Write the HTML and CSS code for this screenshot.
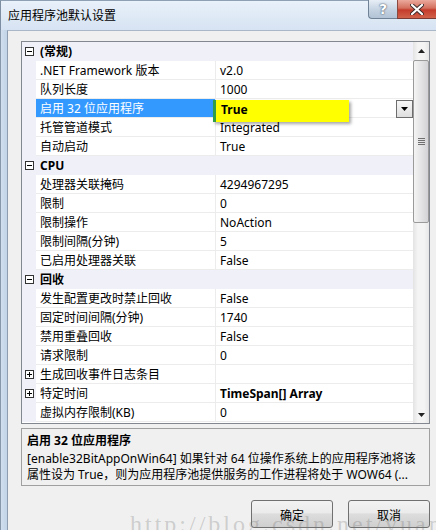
FILE: index.html
```html
<html>
<head>
<meta charset="utf-8">
<title>应用程序池默认设置</title>
<link rel="stylesheet" href="styles.css">
</head>
<body>

<div class="window">
	<div class="titlebar">
		<span class="title">应用程序池默认设置</span>
		<div class="caption">
			<span class="cap-help">?</span>
			<span class="cap-close">
				<svg width="14" height="11" viewBox="0 0 14 11"><path d="M2 1 L12 10 M12 1 L2 10" stroke="#3b2a2a" stroke-width="4" stroke-linecap="round"/><path d="M2 1 L12 10 M12 1 L2 10" stroke="#fff" stroke-width="2.2" stroke-linecap="round"/></svg>
			</span>
		</div>
	</div>

	<div class="frame">
		<div class="edge"></div>
		<div class="client">

			<div class="grid">
				<div class="rows">
					<div class="row cat"><span class="gutter"><svg class="box" width="9" height="9"><rect x="0.5" y="0.5" width="8" height="8" fill="#fff" stroke="#333"/><path d="M2 4.5 H7" stroke="#000"/></svg></span><span class="name">(常规)</span></div>
					<div class="row"><span class="gutter"></span><span class="name">.NET Framework 版本</span><span class="value">v2.0</span></div>
					<div class="row"><span class="gutter"></span><span class="name">队列长度</span><span class="value">1000</span></div>
					<div class="row selected"><span class="gutter"></span><span class="name">启用 32 位应用程序</span><span class="value"><span class="mark">True</span><span class="drop"><svg width="7" height="4"><path d="M0 0 H7 L3.5 4 Z" fill="#000"/></svg></span></span></div>
					<div class="row"><span class="gutter"></span><span class="name">托管管道模式</span><span class="value">Integrated</span></div>
					<div class="row"><span class="gutter"></span><span class="name">自动启动</span><span class="value">True</span></div>
					<div class="row cat"><span class="gutter"><svg class="box" width="9" height="9"><rect x="0.5" y="0.5" width="8" height="8" fill="#fff" stroke="#333"/><path d="M2 4.5 H7" stroke="#000"/></svg></span><span class="name">CPU</span></div>
					<div class="row"><span class="gutter"></span><span class="name">处理器关联掩码</span><span class="value">4294967295</span></div>
					<div class="row"><span class="gutter"></span><span class="name">限制</span><span class="value">0</span></div>
					<div class="row"><span class="gutter"></span><span class="name">限制操作</span><span class="value">NoAction</span></div>
					<div class="row"><span class="gutter"></span><span class="name">限制间隔(分钟)</span><span class="value">5</span></div>
					<div class="row"><span class="gutter"></span><span class="name">已启用处理器关联</span><span class="value">False</span></div>
					<div class="row cat"><span class="gutter"><svg class="box" width="9" height="9"><rect x="0.5" y="0.5" width="8" height="8" fill="#fff" stroke="#333"/><path d="M2 4.5 H7" stroke="#000"/></svg></span><span class="name">回收</span></div>
					<div class="row"><span class="gutter"></span><span class="name">发生配置更改时禁止回收</span><span class="value">False</span></div>
					<div class="row"><span class="gutter"></span><span class="name">固定时间间隔(分钟)</span><span class="value">1740</span></div>
					<div class="row"><span class="gutter"></span><span class="name">禁用重叠回收</span><span class="value">False</span></div>
					<div class="row"><span class="gutter"></span><span class="name">请求限制</span><span class="value">0</span></div>
					<div class="row"><span class="gutter"><svg class="box" width="9" height="9"><rect x="0.5" y="0.5" width="8" height="8" fill="#fff" stroke="#333"/><path d="M2 4.5 H7 M4.5 2 V7" stroke="#000"/></svg></span><span class="name">生成回收事件日志条目</span><span class="value"></span></div>
					<div class="row"><span class="gutter"><svg class="box" width="9" height="9"><rect x="0.5" y="0.5" width="8" height="8" fill="#fff" stroke="#333"/><path d="M2 4.5 H7 M4.5 2 V7" stroke="#000"/></svg></span><span class="name">特定时间</span><span class="value bold">TimeSpan[] Array</span></div>
					<div class="row"><span class="gutter"></span><span class="name">虚拟内存限制(KB)</span><span class="value">0</span></div>
				</div>
				<div class="scrollbar">
					<div class="arrow"><svg width="7" height="4"><path d="M0 4 H7 L3.5 0 Z" fill="#222"/></svg></div>
					<div class="track">
						<div class="thumb"><span class="grip"></span></div>
					</div>
					<div class="arrow"><svg width="7" height="4"><path d="M0 0 H7 L3.5 4 Z" fill="#222"/></svg></div>
				</div>
			</div>

			<div class="desc">
				<div class="desc-title">启用 32 位应用程序</div>
				<div class="desc-line">[enable32BitAppOnWin64] 如果针对 64 位操作系统上的应用程序池将该</div>
				<div class="desc-line">属性设为 True，则为应用程序池提供服务的工作进程将处于 WOW64 (...</div>
			</div>

			<div class="buttons">
				<button class="btn">确定</button>
				<button class="btn">取消</button>
			</div>

		</div>
	</div>

	<div class="watermark">http://blog.csdn.net/yuanbohx</div>
</div>

</body>
</html>
```

FILE: styles.css
```css
body {
	margin: 0;
	font-family: "Noto Sans", "Noto Sans CJK SC", sans-serif;
	font-size: 12px;
	color: #000;
}

.window {
	position: relative;
	width: 436px;
	height: 530px;
	overflow: hidden;
	display: flex;
	flex-direction: column;
	background: #d3e1f1;
}

/* title bar */
.titlebar {
	height: 30px;
	flex: none;
	display: flex;
	justify-content: space-between;
	background: linear-gradient(#e9f1fa, #d6e3f2);
	border-left: 1px solid #7d8ea3;
	border-top: 1px solid #8fa0b4;
	box-sizing: border-box;
}

.title {
	padding: 6px 0 0 7px;
	line-height: 16px;
	font-family: "Noto Sans CJK SC", sans-serif;
}

.caption {
	display: flex;
	align-items: flex-start;
	margin-top: -1px;
}

.cap-help {
	width: 29px;
	height: 19px;
	box-sizing: border-box;
	border: 1px solid #6f8296;
	border-top: none;
	border-right: none;
	border-radius: 0 0 0 4px;
	background: linear-gradient(#e7eef6, #c4d2e1 55%, #b2c3d6);
	color: #fff;
	font: bold 14px "DejaVu Sans", sans-serif;
	text-align: center;
	line-height: 18px;
	text-shadow: 0 0 2px #4a5a6c, 0 0 1px #4a5a6c;
}

.cap-close {
	width: 39px;
	height: 19px;
	box-sizing: border-box;
	border-bottom: 1px solid #7a3a33;
	border-left: 1px solid #8a4a40;
	background: linear-gradient(#eaa99c, #d4705f 45%, #c53c2b 55%, #d0624a);
	display: flex;
	align-items: center;
	justify-content: center;
}

/* frame + client */
.frame {
	flex: 1;
	display: flex;
}

.edge {
	width: 7px;
	flex: none;
	background: linear-gradient(to right, #8898ab 0, #8898ab 1px, #d1dfef 1px, #c2d4e8);
}

.client {
	flex: 1;
	background: #f0f0f0;
	border-left: 1px solid #8e9db0;
	border-top: 1px solid #a9b7c8;
	padding: 10px 6px 0 13px;
	display: flex;
	flex-direction: column;
}

/* property grid */
.grid {
	height: 383px;
	box-sizing: border-box;
	border: 1px solid #828790;
	background: #fff;
	display: flex;
}

.rows {
	width: 391px;
	background: #fff;
}

.row {
	display: grid;
	grid-template-columns: 14px 180px 1fr;
	grid-template-rows: 19px;
	height: 19px;
}

.gutter {
	background: #f0f1f8;
	display: flex;
	align-items: center;
	padding-left: 3px;
}

.box {
	display: block;
}

.name,
.value {
	box-sizing: border-box;
	height: 19px;
	padding-top: 2px;
	line-height: 16px;
	border-bottom: 1px solid #ececec;
	white-space: nowrap;
}

.name {
	padding-left: 4px;
	border-right: 1px solid #ececec;
	overflow: hidden;
}

.value {
	position: relative;
	padding-left: 4px;
}

.bold {
	font-weight: bold;
}

.cat {
	background: #f0f1f8;
}

.cat .name {
	grid-column: 2 / 4;
	font-weight: bold;
	border-right: none;
	border-bottom-color: #f0f1f8;
}

.selected .name {
	background: #3399ff;
	color: #fff;
}

/* yellow marker over the selected value */
.mark {
	position: absolute;
	left: -3px;
	top: 1px;
	width: 128px;
	height: 22px;
	padding-left: 5px;
	border-left: 3px solid #2f9d4a;
	background: #ffff00;
	font-weight: bold;
	line-height: 19px;
	box-shadow: 2px 2px 3px rgba(0,0,0,0.35);
}

.drop {
	position: absolute;
	right: 0;
	top: 1px;
	width: 17px;
	height: 18px;
	box-sizing: border-box;
	border: 1px solid #6d6d6d;
	background: linear-gradient(#f7f7f7, #dedede);
	display: flex;
	align-items: center;
	justify-content: center;
}

.scrollbar {
	width: 16px;
	display: flex;
	flex-direction: column;
	background: linear-gradient(to right, #e3e3e3, #f4f4f4 30%, #f4f4f4 70%, #e6e6e6);
}

.arrow {
	height: 17px;
	flex: none;
	display: flex;
	align-items: center;
	justify-content: center;
}

.track {
	flex: 1;
	padding-top: 1px;
}

.thumb {
	height: 163px;
	box-sizing: border-box;
	border: 1px solid #9a9a9a;
	border-radius: 2px;
	background: linear-gradient(to right, #f4f4f4, #e4e4e6 50%, #d3d3d7);
	display: flex;
	align-items: center;
	justify-content: center;
}

.grip {
	width: 7px;
	height: 7px;
	background: repeating-linear-gradient(#6f6f6f 0, #6f6f6f 1px, transparent 1px, transparent 2px);
}

/* description panel */
.desc {
	margin-top: 4px;
	height: 58px;
	box-sizing: border-box;
	border: 1px solid #a0a0a0;
	padding: 4px 0 0 5px;
	line-height: 16px;
	white-space: nowrap;
	overflow: hidden;
}

.desc-title {
	font-weight: bold;
	margin-bottom: 2px;
}

/* dialog buttons */
.buttons {
	display: flex;
	justify-content: flex-end;
	gap: 15px;
	margin-top: 14px;
}

.btn {
	width: 82px;
	height: 28px;
	border: 1px solid #707070;
	border-radius: 3px;
	background: linear-gradient(#f2f2f2, #ebebeb 45%, #dddddd 50%, #cfcfcf);
	font-family: "Noto Sans CJK SC", sans-serif;
	font-size: 12px;
	color: #000;
	padding: 0;
}

.watermark {
	position: absolute;
	left: 130px;
	top: 511px;
	font: 24px "Liberation Serif", serif;
	color: rgba(120,120,120,0.3);
	letter-spacing: 3px;
	white-space: nowrap;
}
```
